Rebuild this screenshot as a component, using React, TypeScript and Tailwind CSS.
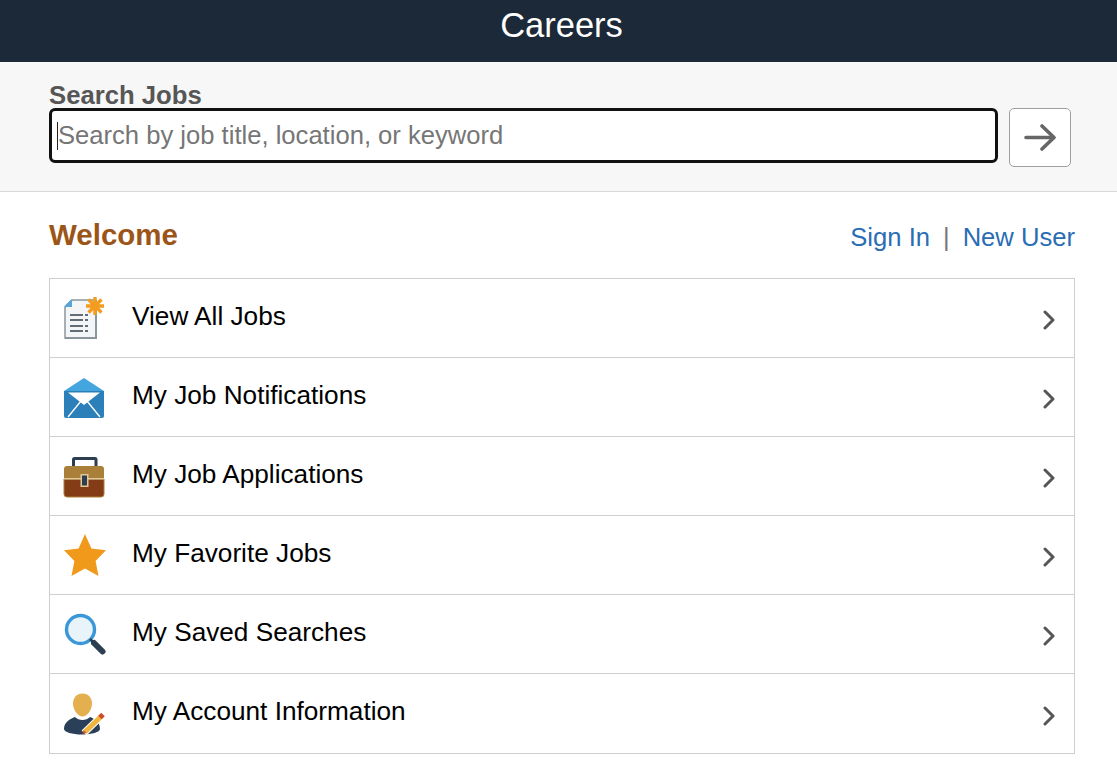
const FONT = "font-['Liberation_Sans',Arial,sans-serif]"

const JobsIcon = () => (
  <svg width="44" height="46" viewBox="0 0 44 46">
    <path d="M9 5h24v38H2V12z" fill="#f3f5f6" stroke="#8a969e" strokeWidth="1.5" />
    <path d="M2 12l7-7v7z" fill="#5aa5d8" />
    <path d="M9 5l-7 7" stroke="#5aa5d8" strokeWidth="2" />
    <path d="M2 43h31V12" fill="none" stroke="#8a969e" strokeWidth="2" />
    <path d="M7 20h13M7 25h13M7 31h13M7 36h13" stroke="#33424d" strokeWidth="1.6" />
    <path d="M22 20h3M22 25h3M22 31h3M22 36h3" stroke="#33424d" strokeWidth="1.6" />
    <path d="M32 2v18M23 11h18M25.5 4.5l13 13M38.5 4.5l-13 13" stroke="#f39c1f" strokeWidth="3.4" />
  </svg>
)

const MailIcon = () => (
  <svg width="44" height="42" viewBox="0 0 44 42">
    <path d="M1 15L21 2l20 13v3H1z" fill="#45a5de" />
    <path d="M1 15h40v25a2 2 0 0 1-2 2H3a2 2 0 0 1-2-2z" fill="#2b80ba" />
    <path d="M5 16.5h32L21 29z" fill="#fff" />
    <path d="M5 41l13-16M37 41L24 25" stroke="#fff" strokeWidth="1.3" fill="none" />
  </svg>
)

const CaseIcon = () => (
  <svg width="44" height="44" viewBox="0 0 44 44">
    <path d="M10.5 13V5.5a1 1 0 0 1 1-1h20.5a1 1 0 0 1 1 1V13" fill="none" stroke="#2c3e50" strokeWidth="3" />
    <path d="M1 24V15a3 3 0 0 1 3-3h34a3 3 0 0 1 3 3v9z" fill="#a97f3a" />
    <path d="M1 25h40v15a3 3 0 0 1-3 3H4a3 3 0 0 1-3-3z" fill="#843c16" stroke="#a97f3a" strokeWidth="1" />
    <rect x="1" y="24" width="40" height="1.5" fill="#e0c998" />
    <rect x="17.5" y="20" width="8" height="13" fill="#e0c998" />
    <rect x="19" y="21.5" width="5" height="10" fill="#2c3e50" />
  </svg>
)

const StarIcon = () => (
  <svg width="44" height="44" viewBox="0 0 44 44">
    <path d="M22 1l6.4 14.6L43 17.2 32.6 28l2.9 15L22 35.6 8.5 43l2.9-15L1 17.2l14.6-1.6z" fill="#f0991b" />
  </svg>
)

const SearchIcon = () => (
  <svg width="44" height="44" viewBox="0 0 44 44">
    <circle cx="17.5" cy="17.5" r="14" fill="#e9f3fa" stroke="#3a98d8" strokeWidth="3.4" />
    <path d="M27 27l4 4" stroke="#2c3e50" strokeWidth="2.5" />
    <path d="M31 31l8.5 8.5" stroke="#2c3e50" strokeWidth="6" strokeLinecap="round" />
  </svg>
)

const AccountIcon = () => (
  <svg width="44" height="44" viewBox="0 0 44 44">
    <path d="M19.5 1.5c5.5 0 9.5 4 9.5 10 0 6.5-5 13-9.5 13S10 18 10 11.5c0-6 4-10 9.5-10z" fill="#e3af4f" />
    <path d="M1 37c0-7 6-10 11-12 2 2 4.5 3 7.5 3s5.5-1 7.500-3c5 2 10 5 10 12 0 3-8 5.500-18 5.500S1 40 1 37z" fill="#2a3f58" />
    <path d="M21 41l17-16.5" stroke="#fff" strokeWidth="7" />
    <path d="M22 40l16-15.500" stroke="#efb53c" strokeWidth="5" />
    <path d="M37 25.500l3-3" stroke="#cf4a2b" strokeWidth="5" />
    <path d="M19.500 42l1-4 3 3z" fill="#cf4a2b" />
  </svg>
)

const Arrow = () => (
  <svg width="33" height="27" viewBox="0 0 33 27">
    <path d="M2 13.500h27M18 2l12 11.500L18 25" fill="none" stroke="#666" strokeWidth="3.600" strokeLinecap="round" strokeLinejoin="round" />
  </svg>
)

const Chevron = () => (
  <svg width="14" height="20" viewBox="0 0 14 20" className="text-[#555] mt-[4px]">
    <path d="M3 2l8 8-8 8" fill="none" stroke="currentColor" strokeWidth="3" strokeLinecap="round" strokeLinejoin="round" />
  </svg>
)

const items = [
  { label: 'View All Jobs', icon: <JobsIcon /> },
  { label: 'My Job Notifications', icon: <MailIcon /> },
  { label: 'My Job Applications', icon: <CaseIcon /> },
  { label: 'My Favorite Jobs', icon: <StarIcon /> },
  { label: 'My Saved Searches', icon: <SearchIcon /> },
  { label: 'My Account Information', icon: <AccountIcon /> },
]

const App = () => {
  return (
    <div className={`min-h-[765px] bg-white ${FONT}`}>
      <header className="h-[62px] bg-[#1c2938] flex items-center justify-center pb-[12px]">
        <h1 className="text-white text-[34.500px] leading-none ml-[6px]">Careers</h1>
      </header>

      <section className="h-[130px] bg-[#f7f7f7] border-b border-[#d8d8d8] pl-[49px] pr-[46px] pt-[20px]">
        <label className="block text-[#565656] text-[25.700px] font-bold leading-[26px]">Search Jobs</label>
        <div className="flex items-start gap-[11px]">
          <div className="relative">
            <input
              className="block w-[949px] h-[55px] bg-white border-[3px] border-[#111] rounded-[6px] px-[6px] text-[25.600px] outline-none placeholder:text-[#767676]"
              placeholder="Search by job title, location, or keyword"
            />
            <span className="absolute left-[8px] top-[14px] h-[28px] w-px bg-[#222]" />
          </div>
          <button className="w-[62px] h-[59px] bg-white border border-[#a0a0a0] rounded-[5px] flex items-center justify-center">
            <Arrow />
          </button>
        </div>
      </section>

      <main className="pl-[49px] pr-[42px]">
        <div className="flex items-center justify-between h-[86px]">
          <h2 className="text-[#9c5518] text-[29.500px] font-bold">Welcome</h2>
          <div className="flex items-center text-[25.600px] text-[#2a6db5] mt-[5px]">
            <a>Sign In</a>
            <span className="text-[#777] px-[13px]">|</span>
            <a>New User</a>
          </div>
        </div>
        <ul className="border border-[#cfcfcf] border-b-0">
          {items.map((item, i) => (
            <li key={item.label} className={`${i === 5 ? 'h-[80px]' : 'h-[79px]'} flex items-center border-b border-[#cfcfcf] pl-[13px] pr-[18px]`}>
              <span className="w-[44px] flex justify-center">{item.icon}</span>
              <span className="ml-[25px] flex-1 text-[26.200px] text-black pb-[3px]">{item.label}</span>
              <Chevron />
            </li>
          ))}
        </ul>
      </main>
    </div>
  )
}

export default App
